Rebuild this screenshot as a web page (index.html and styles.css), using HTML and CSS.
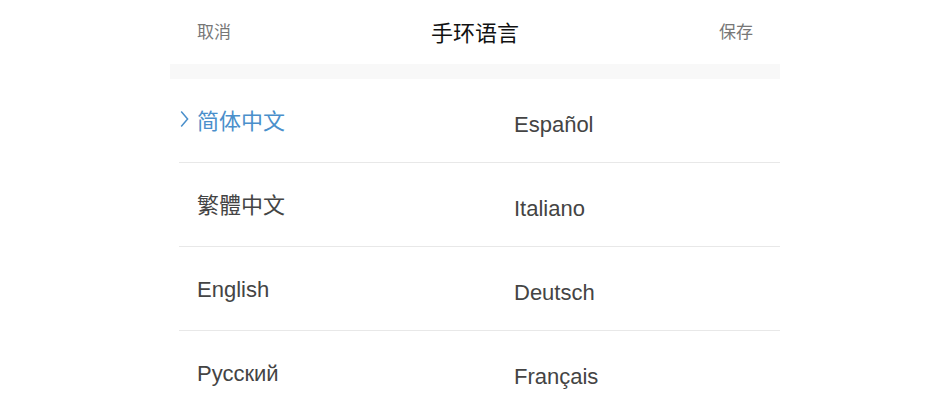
FILE: index.html
```html
<!DOCTYPE html>
<html lang="zh">
<head>
<meta charset="utf-8">
<link rel="stylesheet" href="styles.css">
</head>
<body>
<div class="screen">
  <header class="topbar">
    <span class="action">取消</span>
    <span class="title">手环语言</span>
    <span class="action">保存</span>
  </header>
  <div class="band"></div>
  <div class="list">
    <div class="row">
      <div class="cell left selected">
        <svg class="chev" width="9" height="18" viewBox="0 0 9 18"><polyline points="1.2,1.5 7.6,9 1.2,16.5" fill="none" stroke="#4a8fcb" stroke-width="1.5"/></svg>
        <span>简体中文</span>
      </div>
      <div class="cell right">Español</div>
    </div>
    <div class="row">
      <div class="cell left">繁體中文</div>
      <div class="cell right">Italiano</div>
    </div>
    <div class="row">
      <div class="cell left latin">English</div>
      <div class="cell right">Deutsch</div>
    </div>
    <div class="row last">
      <div class="cell left latin">Русский</div>
      <div class="cell right">Français</div>
    </div>
  </div>
</div>
</body>
</html>
```
FILE: styles.css
```css
html, body {
  margin: 0;
  padding: 0;
  background: #ffffff;
}
body {
  font-family: "Liberation Sans", "Noto Sans CJK SC", sans-serif;
  color: #444444;
}
.screen {
  width: 610px;
  margin-left: 170px;
}
.topbar {
  height: 64px;
  display: flex;
  align-items: center;
  justify-content: space-between;
  padding: 0 27px;
}
.action {
  font-family: "Noto Sans CJK SC", sans-serif;
  font-size: 17px;
  color: #777777;
  padding-bottom: 3px;
}
.title {
  font-family: "Noto Sans CJK SC", sans-serif;
  font-size: 22px;
  color: #111111;
  padding-bottom: 3px;
}
.band {
  height: 15px;
  background: #f8f8f8;
}
.list {
  display: flex;
  flex-direction: column;
}
.row {
  display: flex;
  height: 83px;
  margin-left: 9px;
  border-bottom: 1px solid #e8e8e8;
}
.row.last {
  border-bottom: none;
}
.cell {
  display: flex;
  align-items: center;
  font-size: 22px;
  color: #444444;
  box-sizing: border-box;
}
.left {
  width: 308px;
  padding-left: 18px;
  padding-bottom: 4px;
}
.left.latin {
  padding-bottom: 0;
  padding-top: 2px;
}
.right {
  flex: 1;
  padding-left: 27px;
  padding-top: 8px;
}
.left.selected {
  padding-left: 1px;
  color: #4a8fcb;
  gap: 8px;
}
.chev {
  display: block;
}
```
